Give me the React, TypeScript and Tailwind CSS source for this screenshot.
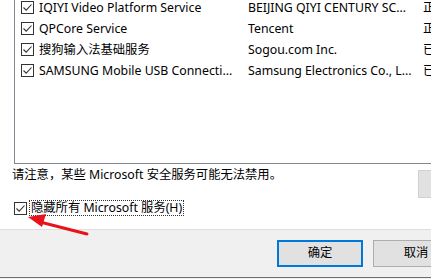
import React from "react";

const font = { fontFamily: '"Noto Sans", "Noto Sans CJK SC", sans-serif' };

function Check() {
  return (
    <span className="inline-flex w-[13px] h-[13px] shrink-0 border border-[#333333] bg-white items-center justify-center">
      <svg width="11" height="11" viewBox="0 0 11 11">
        <path d="M1.5 5.5 L4.2 8.2 L9.5 2.5" stroke="#333333" strokeWidth="1.1" fill="none" />
      </svg>
    </span>
  );
}

const rows = [
  ["IQIYI Video Platform Service", "BEIJING QIYI CENTURY SC...", "正"],
  ["QPCore Service", "Tencent", "正"],
  ["搜狗输入法基础服务", "Sogou.com Inc.", "已"],
  ["SAMSUNG Mobile USB Connecti...", "Samsung Electronics Co., L...", "已"],
];

export default function App() {
  return (
    <div className="relative w-[431px] h-[279px] overflow-hidden bg-white flex flex-col text-[12.3px] text-black" style={font}>
      <div className="h-[229px] shrink-0 flex flex-col">
        <div className="ml-[14px] mr-[-20px] mt-[-4px] h-[168px] shrink-0 border-l border-b border-t border-[#828790] flex flex-col">
          {rows.map((r, i) => (
            <div key={i} className="h-[21px] shrink-0 flex items-center">
              <div className="w-[233px] shrink-0 flex items-center pl-[6px] gap-[5px] whitespace-nowrap">
                <Check />
                <span className="leading-[16px]">{r[0]}</span>
              </div>
              <div className="w-[175px] shrink-0 whitespace-nowrap leading-[16px]">{r[1]}</div>
              <div className="whitespace-nowrap leading-[16px]">{r[2]}</div>
            </div>
          ))}
        </div>
        <div className="flex mt-[3px]">
          <div className="flex flex-col pl-[12px]">
            <div className="leading-[16px] h-[16px] whitespace-nowrap">请注意，某些 Microsoft 安全服务可能无法禁用。</div>
            <div className="mt-[17px] flex items-center h-[16px] pl-[2px]">
              <Check />
              <span className="ml-[2px] px-[1px] leading-[14px] border border-dotted border-[#333333] whitespace-nowrap">隐藏所有 Microsoft 服务(H)</span>
            </div>
          </div>
          <div className="ml-auto mt-[3px] w-[13px] h-[28px] bg-[#e1e1e1] border border-r-0 border-[#d0d0d0]" />
        </div>
      </div>
      <div className="h-[48px] shrink-0 bg-[#f0f0f0] border-t border-[#dfdfdf] flex items-start pt-[10px] pl-[277px] gap-[10px]">
        <div className="w-[86px] h-[27px] shrink-0 bg-[#e1e1e1] border-2 border-[#0078d7] flex items-center justify-center">确定</div>
        <div className="w-[86px] h-[27px] shrink-0 bg-[#e1e1e1] border border-[#adadad] flex items-center justify-center">取消</div>
      </div>
      <div className="h-[1px] bg-[#6d6d6d] shrink-0" />
      <div className="h-[1px] bg-[#f0f0f0] shrink-0" />
      <svg className="absolute left-0 top-0 pointer-events-none" width="431" height="279">
        <line x1="87" y1="234" x2="40" y2="222" stroke="#e8141a" strokeWidth="3" strokeLinecap="round" />
        <polygon points="28,217 46,214 42,227" fill="#e8141a" />
      </svg>
    </div>
  );
}
